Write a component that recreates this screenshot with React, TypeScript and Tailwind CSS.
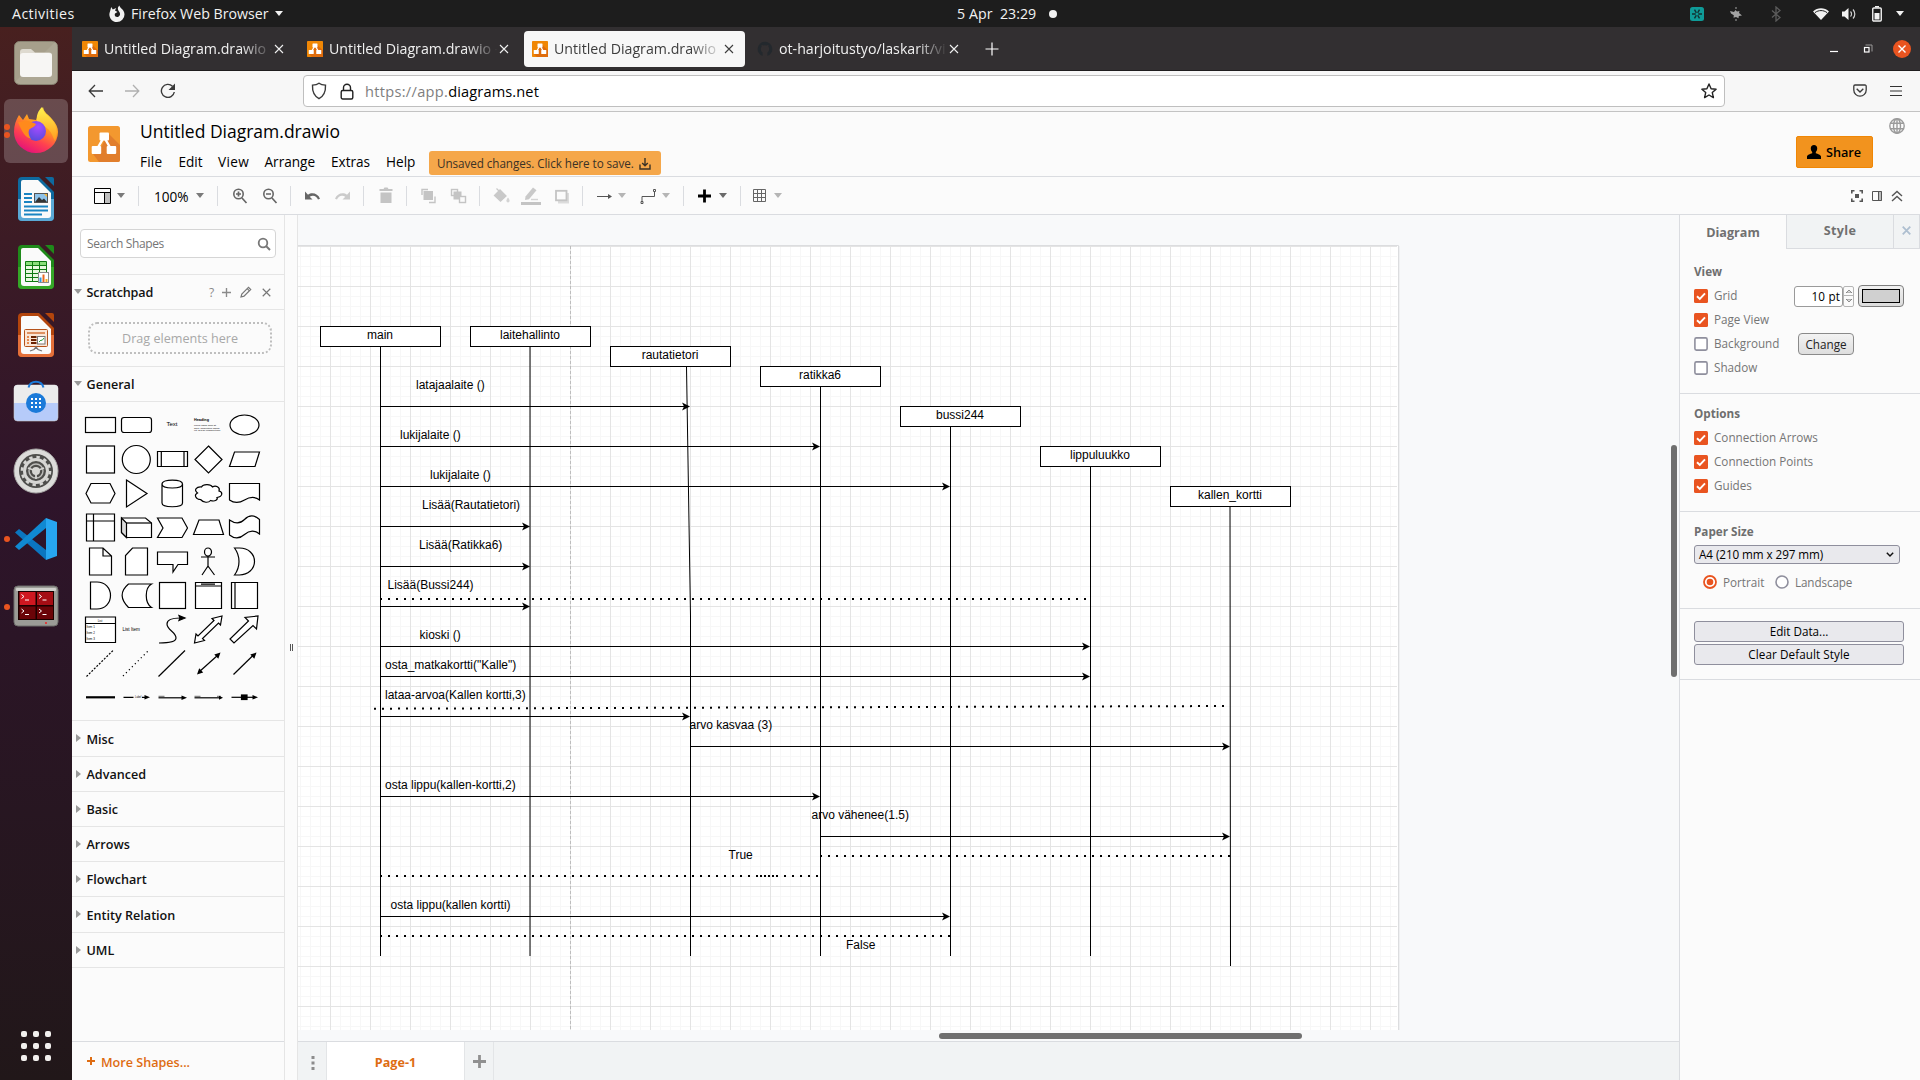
import React from "react";

type P = { children?: React.ReactNode; className?: string };

/* ---------- shared glyphs ---------- */

function DrawioLogo({ className }: { className: string }) {
  return (
    <svg viewBox="0 0 32 32" preserveAspectRatio="none" className={className}>
      <rect width="32" height="32" rx="1.5" fill="#f08705" />
      <path d="M19 6l13 13v13H10l-6-6 8-9z" fill="#df6c0c" />
      <path d="M16 9L8.5 22M16 9l7.5 13" stroke="#fff" strokeWidth="2.6" />
      <rect x="11" y="5" width="10" height="8" rx="1" fill="#fff" />
      <rect x="3.5" y="18" width="10" height="8" rx="1" fill="#fff" />
      <rect x="18.5" y="18" width="10" height="8" rx="1" fill="#fff" />
    </svg>
  );
}

function Caret({ className }: { className: string }) {
  return (
    <svg viewBox="0 0 8 5" className={"h-[5px] w-2 flex-none " + className}>
      <path d="M0 0h8L4 5z" fill="currentColor" />
    </svg>
  );
}

/* ---------- desktop top bar ---------- */

function TopBar() {
  return (
    <header className="flex h-[27px] flex-none items-center bg-[#1d1d1d] text-[14.2px] leading-none text-[#f2f2f2]">
      <span className="ml-3 mt-px w-[62px] tracking-[0.42px]">Activities</span>
      <svg viewBox="0 0 16 18" className="ml-[35px] h-[18px] w-4 flex-none">
        <path d="M8 17A7.5 7.5 0 0 1 1 6.5L2.2 2l1.6 2.4L7.2 3 6 5.6 8.5 7 6 8.6C5 11 7 12.5 8.8 12c2.4-.6 3-3.4 1.2-5.6C8.3 4.5 8.5 2 10.5.5c0 2.5 5 4 5 9A7.5 7.5 0 0 1 8 17z" fill="#f2f2f2" />
      </svg>
      <span className="ml-1.5 mt-px w-[138px] whitespace-nowrap">Firefox Web Browser</span>
      <Caret className="ml-1.5" />
      <span className="ml-[674px] mt-px w-[43px] whitespace-nowrap tracking-[0.1px]">5 Apr</span>
      <span className="mt-px w-9">23:29</span>
      <span className="ml-[13px] size-2 rounded-full bg-[#f2f2f2]" />
      <div className="ml-auto flex items-center">
        <svg viewBox="0 0 14 14" className="h-3.5 w-3.5">
          <rect width="14" height="14" rx="2.5" fill="#0f9b98" />
          <path d="M2 7h10M4.5 2.7l5 8.6M9.5 2.7l-5 8.6" stroke="#12302f" strokeWidth="1.4" />
          <circle cx="7" cy="7" r="1.5" fill="#0f9b98" />
        </svg>
        <svg viewBox="0 0 14 14" className="ml-[25px] h-3.5 w-3.5">
          <path d="M1 4l4 1 1.500-2L8 4.500 10.500 4 10 6l3 2.500L9.800 9l-.3 2.200L7 10l-2.500.7.300-2.400L2 6.500z" fill="#a3a3a3" />
          <circle cx="7" cy="1" r="1" fill="#777" />
          <circle cx="7" cy="13" r="1" fill="#777" />
        </svg>
        <svg viewBox="0 0 10 16" className="ml-7 h-4 w-2.5">
          <path d="M1 4.500l8 7L5 15V1l4 3.500-8 7" fill="none" stroke="#5c5c5c" strokeWidth="1.3" />
        </svg>
        <svg viewBox="0 0 16 12" className="ml-8 h-3 w-4">
          <path d="M0 3.500C4.500-.8 11.500-.8 16 3.500L8 12z" fill="#f2f2f2" />
          <path d="M2 4.600C5.500 1.900 10.500 1.900 14 4.600" fill="none" stroke="#1d1d1d" strokeWidth="1" />
        </svg>
        <svg viewBox="0 0 16 14" className="ml-3 h-3.5 w-4">
          <path d="M1 4.500h2.500L7.500 1v12l-4-3.500H1z" fill="#f2f2f2" />
          <path d="M9.500 4.500a3.500 3.500 0 0 1 0 5M12 2.500a6.500 6.500 0 0 1 0 9" fill="none" stroke="#d0d0d0" strokeWidth="1.2" />
        </svg>
        <svg viewBox="0 0 10 16" className="ml-[15px] h-4 w-2.5">
          <path d="M3 0h4v1.500H3z" fill="#f2f2f2" />
          <rect x=".75" y="2" width="8.5" height="13" rx="1" fill="none" stroke="#f2f2f2" strokeWidth="1.4" />
          <rect x="2.5" y="7" width="5" height="6.5" fill="#f2f2f2" />
        </svg>
        <Caret className="ml-3.5 mr-4" />
      </div>
    </header>
  );
}

/* ---------- dock ---------- */

function Slot({ children, active, dots = 0 }: { children: React.ReactNode; active?: boolean; dots?: number }) {
  return (
    <div className={"relative flex h-16 w-16 items-center justify-center rounded-md " + (active ? "bg-white/20" : "")}>
      {dots > 0 && (
        <div className="absolute inset-y-0 left-0 flex flex-col justify-center gap-[2px]">
          {Array.from({ length: dots }, (_, i) => (
            <span key={i} className="size-1.5 rounded-full bg-[#e95420]" />
          ))}
        </div>
      )}
      {children}
    </div>
  );
}

function OfficeDoc({ dark, light, children }: { dark: string; light: string; children: React.ReactNode }) {
  return (
    <svg viewBox="0 0 36 44" className="h-11 w-9">
      <path d="M4 0h17l15 15v25a4 4 0 0 1-4 4H4a4 4 0 0 1-4-4V4a4 4 0 0 1 4-4z" fill={dark} />
      <path d="M0 22h36v18a4 4 0 0 1-4 4H4a4 4 0 0 1-4-4z" fill={light} />
      <path d="M5 3h15l13 13v22a3 3 0 0 1-3 3H6a3 3 0 0 1-3-3V5a2 2 0 0 1 2-2z" fill="#fafafa" />
      <path d="M27 0h7a2 2 0 0 1 2 2v7z" fill={dark} />
      {children}
    </svg>
  );
}

function Dock() {
  return (
    <nav className="flex w-[72px] flex-none flex-col items-center gap-1 bg-linear-to-b from-[#48201f] via-[#2e142a] via-45% to-[#211719] pt-1">
      <Slot>
        <svg viewBox="0 0 44 44" className="size-11">
          <rect x=".5" y=".5" width="43" height="43" rx="5" fill="#a69f8b" stroke="#878170" />
          <path d="M1 41L41 1a4 4 0 0 1 2 4v33a5 5 0 0 1-5 5H6z" fill="#b3ad9b" opacity=".6" />
          <path d="M6 11a3 3 0 0 1 3-3h8l4 3.500h14a3 3 0 0 1 3 3V20H6z" fill="#dedad0" />
          <rect x="6" y="12" width="32" height="24" rx="3" fill="#f7f6f4" />
        </svg>
      </Slot>
      <Slot active dots={2}>
        <svg viewBox="0 0 44 46" className="mb-0.5 h-[46px] w-11">
          <defs>
            <linearGradient id="ffBody" x1=".8" y1="0" x2=".3" y2="1">
              <stop offset="0" stopColor="#ffe83f" />
              <stop offset=".4" stopColor="#ff9a1f" />
              <stop offset=".7" stopColor="#ff4050" />
              <stop offset="1" stopColor="#e2107c" />
            </linearGradient>
            <radialGradient id="ffGlobe" cx=".6" cy=".3" r=".8">
              <stop offset="0" stopColor="#a64bff" />
              <stop offset="1" stopColor="#4f4bd8" />
            </radialGradient>
            <linearGradient id="ffFlame" x1=".5" y1="0" x2=".5" y2="1">
              <stop offset="0" stopColor="#fff44f" />
              <stop offset="1" stopColor="#ff9a1f" />
            </linearGradient>
          </defs>
          <path d="M5 8l4 5 4-6 2 5 7 1 3-7 4-6c1 6 5 7 9 12 4 4 6 9 6 13a22 21 0 0 1-44 0c0-7 2-12 5-17z" fill="url(#ffBody)" />
          <path d="M28 0c1 6 6 8 10 13 5 6 6 14 3 21-2-3-3-8-6-11-3-4-10-4-12-9-1-5 1-10 5-14z" fill="url(#ffFlame)" />
          <circle cx="22" cy="24" r="10" fill="url(#ffGlobe)" />
          <path d="M4 15c4 0 6-2 10-1 3 1 6 2 8 3-1 3-6 4-7 6-1 3 0 6 2 9-6-2-9-7-13-17z" fill="#ff8a1c" />
        </svg>
      </Slot>
      <Slot>
        <OfficeDoc dark="#0e6a9f" light="#5aa9d6">
          <path d="M6 17h8M6 21h8M6 25h8M6 29.500h24M6 33.500h24M6 37.500h18" stroke="#1984c2" strokeWidth="1.8" />
          <rect x="16.5" y="16.5" width="13" height="9" fill="#8fc3ea" stroke="#555" />
          <path d="M17 25l4-5 3 3 2-1.500L29 25z" fill="#333" />
          <path d="M26 17h3v3z" fill="#f5b73c" />
        </OfficeDoc>
      </Slot>
      <Slot>
        <OfficeDoc dark="#1f8a1a" light="#35a827">
          <rect x="7.5" y="16.5" width="21" height="20" fill="#e8f9df" />
          <rect x="7.5" y="16.5" width="21" height="4" fill="#8ade7a" />
          <path d="M7.500 16.500h21v20h-21zM7.500 20.500h21M7.500 24.500h21M7.500 28.500h21M7.500 32.500h21M14.500 16.500v20M21.500 16.500v20" fill="none" stroke="#0f7a12" />
          <rect x="20.5" y="27.5" width="10" height="10" fill="#fff" stroke="#8a8a8a" />
          <path d="M22.500 37v-4.500" stroke="#2a98e0" strokeWidth="2" />
          <path d="M25.500 37v-7.500" stroke="#e8691f" strokeWidth="2" />
          <path d="M28.500 37v-3" stroke="#f3b321" strokeWidth="2" />
        </OfficeDoc>
      </Slot>
      <Slot>
        <OfficeDoc dark="#b3450c" light="#e4703a">
          <rect x="6.5" y="16.5" width="23" height="17" rx="1" fill="#fbe6d6" stroke="#b5521a" />
          <path d="M9 20h18" stroke="#d5733a" strokeWidth="1.5" />
          <path d="M9 24h2M9 27h2M9 30h2" stroke="#e58a50" strokeWidth="1.8" />
          <path d="M13 24h5.500M13 27h5.500M13 30h5.500" stroke="#6b2200" strokeWidth="1.8" />
          <rect x="19.5" y="23.5" width="7.5" height="7.5" fill="#fff" stroke="#777" />
          <path d="M21 29l2-2 1 .5 2-2.500" fill="none" stroke="#2d9e3a" />
          <path d="M12 38l4-1.500L18 34l2 2.500 4 1.500" fill="none" stroke="#777" strokeWidth="1.3" />
        </OfficeDoc>
      </Slot>
      <Slot>
        <svg viewBox="0 0 46 44" className="mb-1.5 h-11 w-[46px]">
          <rect x="1" y="7" width="44" height="36" rx="3.5" fill="#b6cbfa" stroke="#c9c9c9" strokeWidth=".6" />
          <path d="M1 25V10.500A3.500 3.500 0 0 1 4.500 7h37a3.500 3.500 0 0 1 3.500 3.500V25z" fill="#ececec" />
          <path d="M15.500 9.500a7.800 7.800 0 0 1 15 0" fill="none" stroke="#1b7ad9" strokeWidth="2" />
          <circle cx="23" cy="25" r="10" fill="#1b7ad9" />
          <g fill="#fff">
            {[18, 22, 26].map((x) => [20, 24, 28].map((y) => <rect key={x + "-" + y} x={x} y={y} width="2" height="2" />))}
          </g>
        </svg>
      </Slot>
      <Slot>
        <svg viewBox="0 0 46 46" className="size-[46px]">
          <circle cx="23" cy="23" r="22" fill="#dcdcda" stroke="#a9a9a7" />
          <circle cx="23" cy="23" r="17" fill="#4e4e4c" />
          <circle cx="23" cy="23" r="11.5" fill="none" stroke="#d6d6d4" strokeWidth="3" />
          <circle cx="23" cy="23" r="14" fill="none" stroke="#d6d6d4" strokeWidth="2.6" strokeDasharray="3.4 3.93" />
          <circle cx="23" cy="23" r="7" fill="none" stroke="#bdbdbb" strokeWidth="1.4" />
          <circle cx="23" cy="23" r="4" fill="#d6d6d4" />
          <path d="M23 23L15 20M23 23l8-3M23 23v8" stroke="#d6d6d4" strokeWidth="1.8" />
        </svg>
      </Slot>
      <Slot dots={1}>
        <svg viewBox="0 0 42 42" className="size-[42px]">
          <path d="M0 14.500l4-3.500 27 21v10z" fill="#0b76c0" />
          <path d="M0 28.500L4 32l27-22V0z" fill="#1089d2" />
          <path d="M31 0l11 4v34l-11 4z" fill="#27a6f0" />
        </svg>
      </Slot>
      <Slot dots={1}>
        <svg viewBox="0 0 46 42" className="mb-0.5 h-[42px] w-[46px]">
          <rect x="1" y="1" width="44" height="40" rx="4" fill="#9b9b96" stroke="#6d6d6a" />
          <rect x="3" y="3" width="40" height="3" rx="1" fill="#cfcfcb" />
          <rect x="5" y="6" width="36" height="29" fill="#1c0000" />
          <rect x="6.5" y="7" width="16" height="13" fill="#cf1720" />
          <rect x="24" y="7" width="16" height="13" fill="#a50d14" />
          <rect x="6.5" y="21.5" width="16" height="12.5" fill="#6b0408" />
          <rect x="24" y="21.5" width="16" height="12.5" fill="#6b0408" />
          <path d="M8.500 9.500l2.500 2-2.500 2M12 15h4M26 9.500l2.500 2-2.500 2M29.500 15h4M8.500 24l2.500 2-2.500 2M12 29.500h4M26 24l2.500 2-2.500 2M29.500 29.500h4" fill="none" stroke="#fff" strokeWidth="1" />
          <circle cx="33" cy="38" r="1" fill="#f02020" />
        </svg>
      </Slot>
      <div className="mt-auto mb-[19px] grid grid-cols-3 gap-1.5">
        {Array.from({ length: 9 }, (_, i) => (
          <span key={i} className="size-1.5 rounded-[2px] bg-[#f2f0ee]" />
        ))}
      </div>
    </nav>
  );
}

/* ---------- browser chrome ---------- */

function Tab({ title, active, icon }: { title: string; active?: boolean; icon: React.ReactNode }) {
  return (
    <div
      className={
        "flex h-9 w-[221px] flex-none items-center rounded pl-2 " +
        (active ? "bg-[#f7f7f7] text-[#3d3d3d]" : "text-[#f0f0f0]")
      }
    >
      {icon}
      <div className="ml-1.5 -mr-1.5 w-[172px] flex-none whitespace-nowrap text-[14.2px] leading-6 [mask-image:linear-gradient(to_right,black_80%,transparent_98%)]">
        {title}
      </div>
      <svg viewBox="0 0 18 18" className="size-[18px] flex-none">
        <path d="M5 5l8 8M13 5l-8 8" stroke="currentColor" strokeWidth="1.1" />
      </svg>
    </div>
  );
}

function BrowserTabs() {
  const logo = <DrawioLogo className="h-4 w-4 flex-none" />;
  return (
    <div className="flex h-11 flex-none items-center gap-1 border-b border-[#1f1d1e] bg-[#322f31] pl-0.5 pt-px">
      <Tab title="Untitled Diagram.drawio -" icon={logo} />
      <Tab title="Untitled Diagram.drawio -" icon={logo} />
      <Tab title="Untitled Diagram.drawio -" active icon={logo} />
      <Tab
        title="ot-harjoitustyo/laskarit/vi"
        icon={
          <svg viewBox="0 0 16 16" className="h-4 w-4 flex-none">
            <path d="M8 .8a7.300 7.300 0 0 0-2.400 14.200v-3.500C4.300 10.500 3.800 9.500 3.800 8c0-1 .3-1.700.8-2.300l-.1-2 1.900.8a7 7 0 0 1 3.200 0l1.900-.8-.1 2c.5.6.8 1.300.8 2.300 0 1.500-.5 2.500-1.800 3.500V15A7.300 7.300 0 0 0 8 .8z" fill="#23282d" />
          </svg>
        }
      />
      <svg viewBox="0 0 14 14" className="ml-[11px] size-3.5">
        <path d="M7 .5v13M.5 7h13" stroke="#fff" strokeWidth="1.2" />
      </svg>
      <div className="ml-auto mr-[9px] flex items-center">
        <svg viewBox="0 0 8 12" className="h-3 w-2">
          <path d="M0 8.500h8" stroke="#fff" strokeWidth="1.2" />
        </svg>
        <svg viewBox="0 0 10 10" className="ml-[25px] size-2.5">
          <path d="M2.500 1h6.500v6.500" fill="none" stroke="#999" strokeWidth="1" />
          <rect x="1.5" y="3.5" width="4.5" height="4.5" fill="none" stroke="#fff" strokeWidth="1.2" />
        </svg>
        <svg viewBox="0 0 18 18" className="ml-5 size-[18px]">
          <circle cx="9" cy="9" r="9" fill="#e95420" />
          <path d="M5.500 5.500l7 7M12.500 5.500l-7 7" stroke="#fff" strokeWidth="1.4" />
        </svg>
      </div>
    </div>
  );
}

function NavBar() {
  return (
    <div className="flex h-[41px] flex-none items-center border-b border-[#c3c3c3] bg-[#f7f7f7]">
      <svg viewBox="0 0 16 14" className="ml-4 h-3.5 w-4 flex-none">
        <path d="M15 7H1.500M7 1L1.200 7 7 13" fill="none" stroke="#3a3a3a" strokeWidth="1.3" />
      </svg>
      <svg viewBox="0 0 16 14" className="ml-5 h-3.5 w-4 flex-none">
        <path d="M1 7h13.500M9 1l5.800 6L9 13" fill="none" stroke="#b0b0b0" strokeWidth="1.3" />
      </svg>
      <svg viewBox="0 0 16 16" className="ml-5 size-4 flex-none">
        <path d="M14.300 9A6.500 6.500 0 1 1 12.500 3.300" fill="none" stroke="#3a3a3a" strokeWidth="1.4" />
        <path d="M15 .5V7H8.500z" fill="#3a3a3a" />
      </svg>
      <div className="ml-[127px] flex h-8 w-[1422px] flex-none items-center rounded border border-[#bfbfbf] bg-white">
        <svg viewBox="0 0 16 18" className="ml-[7px] h-[18px] w-4 flex-none">
          <path d="M8 1.200c2 1.500 4.300 1.800 6.500 1.900C14.800 9.500 13 14 8 16.600 3 14 1.200 9.500 1.500 3.100 3.700 3 6 2.700 8 1.200z" fill="none" stroke="#3a3a3a" strokeWidth="1.4" />
        </svg>
        <svg viewBox="0 0 14 17" className="ml-[13px] h-[17px] w-3.5 flex-none">
          <rect x="1.2" y="7.5" width="11.6" height="8.5" rx="1.5" fill="none" stroke="#222" strokeWidth="1.4" />
          <path d="M3.500 7.500V4.800a3.500 3.500 0 0 1 7 0v2.700" fill="none" stroke="#222" strokeWidth="1.4" />
        </svg>
        <span className="ml-[11px] whitespace-nowrap text-[14.6px] leading-6 text-[#7e7e7e]">
          <span className="tracking-[0.3px]">https://app.</span>
          <span className="tracking-[0.12px] text-black">diagrams.net</span>
        </span>
        <svg viewBox="0 0 16 16" className="ml-auto mr-[7px] size-4">
          <path d="M8 1l2.100 4.700 5 .5-3.800 3.400 1.100 5L8 12l-4.400 2.600 1.100-5L.9 6.200l5-.5z" fill="none" stroke="#222" strokeWidth="1.4" strokeLinejoin="round" />
        </svg>
      </div>
      <svg viewBox="0 0 14 14" className="ml-auto size-3.5">
        <path d="M2 1h10a1.200 1.200 0 0 1 1.200 1.200V6A6.200 6.200 0 0 1 .8 6V2.200A1.200 1.200 0 0 1 2 1z" fill="none" stroke="#3a3a3a" strokeWidth="1.3" />
        <path d="M3.700 4.800L7 8l3.300-3.200" fill="none" stroke="#3a3a3a" strokeWidth="1.4" />
      </svg>
      <svg viewBox="0 0 12 12" className="ml-[23px] mr-[18px] size-3">
        <path d="M0 1.500h12M0 6h12M0 10.500h12" stroke="#333" strokeWidth="1.2" />
      </svg>
    </div>
  );
}

/* ---------- editor header ---------- */

function EditorHeader() {
  return (
    <div className="flex h-[65px] flex-none border-b border-[#dadce0] bg-[#fbfbfb]">
      <svg viewBox="0 0 32 36" className="ml-4 mt-3.5 h-9 w-8 flex-none">
        <rect width="32" height="36" rx="2.5" fill="#f3982f" />
        <path d="M20 7l12 12v15a2 2 0 0 1-2 2H11l-6-8 9-8z" fill="#e17e2c" />
        <path d="M16 11L8.500 24M16 11l7.500 13" stroke="#fff" strokeWidth="2.5" />
        <rect x="11.5" y="6.5" width="9.5" height="8" rx="1" fill="#fff" />
        <rect x="3.7" y="20" width="9.5" height="8" rx="1" fill="#fff" />
        <rect x="18.7" y="20" width="9.5" height="8" rx="1" fill="#fff" />
      </svg>
      <div className="ml-5 mt-[5px] flex flex-col text-black">
        <div className="h-[29px] text-[17.5px] leading-[29px]">Untitled Diagram.drawio</div>
        <div className="flex h-6 text-[13.6px] leading-[31px]">
          <span className="w-[38.5px] tracking-[0.2px]">File</span>
          <span className="w-[39.5px]">Edit</span>
          <span className="w-[46.5px] tracking-[0.4px]">View</span>
          <span className="w-[66.5px]">Arrange</span>
          <span className="w-[55px]">Extras</span>
          <span className="w-[43px]">Help</span>
          <div className="mt-[5px] flex h-6 w-[232px] flex-none items-center whitespace-nowrap rounded-[3px] bg-[#f5a74a] pl-2 pt-px text-[11.7px] leading-none tracking-[-0.07px] text-[#3b3226]">
            Unsaved changes. Click here to save.
            <svg viewBox="0 0 12 12" className="ml-[5px] size-3">
              <path d="M1 6.500V11h10V6.500M6 0v7.500M3.200 5L6 7.800 8.800 5" fill="none" stroke="#3b3226" strokeWidth="1.4" />
            </svg>
          </div>
        </div>
      </div>
      <div className="ml-auto mr-12 mt-6 flex h-8 w-[77px] flex-none items-center justify-center rounded-[2px] border border-[#f08705] bg-[#f2931e] pt-0.5 text-[12.7px] font-semibold text-black">
        <svg viewBox="0 0 14 14" className="mb-0.5 mr-[5px] h-3.5 w-3.5">
          <path d="M7 0a3.200 3.200 0 0 1 3.200 3.500c0 1.500-.6 2.700-1.400 3.500v1.200c2 .8 5.200 1.600 5.200 3.300V14H0v-2.500c0-1.700 3.200-2.500 5.200-3.300V7C4.400 6.200 3.800 5 3.800 3.500A3.200 3.200 0 0 1 7 0z" />
        </svg>
        Share
      </div>
      <svg viewBox="0 0 16 16" className="-ml-8 mr-[15.5px] mt-1.5 size-4">
        <g fill="none" stroke="#9b9b9b" strokeWidth="1.4">
          <circle cx="8" cy="8" r="7.2" />
          <ellipse cx="8" cy="8" rx="3.5" ry="7.2" />
          <path d="M1 5.300h14M1 10.700h14M8 1v14" />
        </g>
      </svg>
    </div>
  );
}

function Sep({ className }: { className: string }) {
  return <span className={"h-5 w-px flex-none bg-[#dadce0] " + className} />;
}

function Tool({ className, children }: P) {
  return (
    <svg viewBox="0 0 20 20" className={"size-5 flex-none " + className}>
      {children}
    </svg>
  );
}

function Toolbar() {
  return (
    <div className="flex h-[38px] flex-none items-center border-b border-[#dadce0] bg-[#fbfbfb]">
      <svg viewBox="0 0 18 18" className="ml-[22px] mr-[5px] size-[18px] flex-none">
        <rect x="11" y="6" width="5" height="10" fill="#bdbdbd" />
        <path d="M.5 1.500h16v15h-16zM.5 5.500h16M10.500 5.500v11" fill="none" stroke="#000" />
      </svg>
      <Caret className="text-[#7a7a7a]" />
      <Sep className="ml-[13px]" />
      <span className="ml-[15px] mt-0.5 w-[34px] text-[13.6px] leading-none text-black">100%</span>
      <Caret className="ml-2 text-[#7a7a7a]" />
      <Sep className="ml-[13px]" />
      <Tool className="ml-3">
        <circle cx="8.5" cy="8" r="4.7" fill="none" stroke="#666" strokeWidth="1.6" />
        <path d="M12 12l4.500 5M8.500 5.500v5M6 8h5" stroke="#666" strokeWidth="1.7" />
      </Tool>
      <Tool className="ml-2.5">
        <circle cx="8.5" cy="8" r="4.7" fill="none" stroke="#666" strokeWidth="1.6" />
        <path d="M12 12l4.500 5M6 8h5" stroke="#666" strokeWidth="1.7" />
      </Tool>
      <Sep className="ml-2.5" />
      <Tool className="ml-[11px]">
        <path d="M3 5.500v8h7.500l-2.800-2.800c3-2 6.800-1.200 8.300 2.800l2-.7C16 7.500 10 5.800 6 8.800z" fill="#666" />
      </Tool>
      <Tool className="ml-2.5">
        <path d="M18 5.500v8h-7.500l2.800-2.800c-3-2-6.800-1.200-8.300 2.800l-2-.7c2-5.300 8-7 12-4z" fill="#cbcbcb" />
      </Tool>
      <Sep className="ml-[11px]" />
      <Tool className="ml-3">
        <path d="M3.500 3h4l1-1.500h3l1 1.500h4v2h-13zM4.500 6.500h11V17h-11z" fill="#c4c4c4" />
      </Tool>
      <Sep className="ml-2.5" />
      <Tool className="ml-[11px]">
        <rect x="5.5" y="5" width="9.5" height="9" fill="#c4c4c4" />
        <path d="M4 9V3.500h6M17 10.500v6h-6" fill="none" stroke="#c4c4c4" strokeWidth="1.4" />
      </Tool>
      <Tool className="ml-2.5">
        <rect x="3.5" y="3.5" width="6" height="6" fill="#fbfbfb" stroke="#c4c4c4" strokeWidth="1.4" />
        <rect x="5.5" y="5.5" width="8" height="8" fill="#c4c4c4" />
        <rect x="11.5" y="10.5" width="6" height="6" fill="#fbfbfb" stroke="#c4c4c4" strokeWidth="1.4" />
      </Tool>
      <Sep className="ml-[11px]" />
      <Tool className="ml-[11px]">
        <path d="M3.500 9.500L9 4l6 6-5.500 5zM5.500 2.500l3 3" fill="#c9c9c9" stroke="#c9c9c9" strokeWidth="1.3" />
        <path d="M17 11.500c1.200 1.700 1.600 2.500 1.600 3.300a1.600 1.600 0 0 1-3.200 0c0-.8.4-1.600 1.600-3.300z" fill="#d4d4d4" />
      </Tool>
      <Tool className="ml-2.5">
        <path d="M4.500 10.500L12 1.500l3.500 2.700-7.500 9-4 .8z" fill="#c9c9c9" />
        <path d="M10 13.500h7" stroke="#d4d4d4" strokeWidth="1.4" />
        <path d="M0 17.500h20" stroke="#c4c4c4" strokeWidth="3" />
      </Tool>
      <Tool className="ml-[11px]">
        <path d="M6 7h11v10.500H6z" fill="#dcdcdc" />
        <rect x="4" y="4.800" width="10.500" height="9.500" fill="#fbfbfb" stroke="#c4c4c4" strokeWidth="1.8" />
      </Tool>
      <Sep className="ml-2.5" />
      <Tool className="ml-[11px]">
        <path d="M3 10.500h13" stroke="#555" />
        <path d="M14 8l4 2.500-4 2.500z" fill="#555" />
      </Tool>
      <Caret className="ml-1 text-[#b5b5b5]" />
      <Tool className="ml-3">
        <path d="M4 15v-4.500h12.500V6" fill="none" stroke="#555" />
        <path d="M3 15.500h2v2H3zM15.500 3.500h2v2h-2z" fill="#fff" stroke="#555" />
      </Tool>
      <Caret className="ml-1 text-[#b5b5b5]" />
      <Sep className="ml-[13px]" />
      <Tool className="ml-2.5">
        <path d="M10.500 3.500v13M4 10h13" stroke="#000" strokeWidth="2.800" />
      </Tool>
      <Caret className="ml-[5px] text-[#6a6a6a]" />
      <Sep className="ml-[13px]" />
      <Tool className="ml-[9px]">
        <path d="M3.500 3.500h12v12h-12zM3.500 7.500h12M3.500 11.500h12M7.500 3.500v12M11.500 3.500v12" fill="none" stroke="#666" />
      </Tool>
      <Caret className="ml-1 text-[#b5b5b5]" />
      <div className="ml-auto mr-[17px] flex items-center gap-2">
        <svg viewBox="0 0 12 12" className="size-3">
          <path d="M.8 3.500V.8h2.700M8.500.8h2.700v2.700M11.200 8.500v2.700H8.500M3.500 11.200H.8V8.500" fill="none" stroke="#555" strokeWidth="1.6" />
          <rect x="4" y="4" width="4" height="4" fill="#555" />
        </svg>
        <svg viewBox="0 0 12 12" className="size-3">
          <rect x="7" y="1" width="4" height="10" fill="#bbb" />
          <path d="M1.500 1.500h9v9h-9zM7.500 1.500v9" fill="none" stroke="#555" />
        </svg>
        <svg viewBox="0 0 12 12" className="size-3">
          <path d="M1 6l5-4.500L11 6M1 11l5-4.500L11 11" fill="none" stroke="#555" strokeWidth="1.4" />
        </svg>
      </div>
    </div>
  );
}

/* ---------- shape sidebar ---------- */

const shapes: React.ReactNode[] = [
  <rect x="3.5" y="9.5" width="30" height="15" />,
  <rect x="3.5" y="9.5" width="30" height="15" rx="2.5" />,
  <text x="18" y="18" fontSize="6" textAnchor="middle" fill="#000" stroke="none">Text</text>,
  <g stroke="none" fill="#000">
    <text x="4" y="13" fontSize="3.8" fontWeight="bold">Heading</text>
    <text x="4" y="18" fontSize="2.3">Lorem ipsum dolor sit</text>
    <text x="4" y="20.5" fontSize="2.3">amet, consectetur adipisi</text>
    <text x="4" y="23" fontSize="2.3">elit, sed do eiusmod temp</text>
  </g>,
  <ellipse cx="18.5" cy="17" rx="14.5" ry="10" />,
  <rect x="4.5" y="4" width="28" height="27" />,
  <circle cx="18.3" cy="17.5" r="14" />,
  <path d="M3.500 9.500h30v15h-30zM7.300 9.500v15M30 9.500v15" />,
  <path d="M18.500 4l13.500 13.500L18.500 31 5 17.500z" />,
  <path d="M8.500 10h25L29 24.500H3.500z" />,
  <path d="M9 7.500h19l5 10-5 9.500H9l-5-9.500z" />,
  <path d="M8.500 4l20.500 13.500L8.500 31z" />,
  <path d="M8 8v19c0 5 20.500 5 20.500 0V8c0-5.300-20.500-5.300-20.500 0s20.500 5.300 20.500 0" />,
  <path d="M11.500 11c-5-.5-8 3-4 6-4 2-1.500 6.500 3 6.500 3 3.500 8 3.500 10 1 5 1.500 7.500-1 6.500-3 6-1 6-5.500 2-6.500 1.500-4-3.500-6-6.500-4-2-3.500-9.500-3-11 0z" />,
  <path d="M3.500 7.500h30v16.500c-5-4-10-3-15 0s-10 3.500-15 0z" />,
  <path d="M4.500 4h28v27h-28zM11.500 4v27M4.500 11h28" />,
  <g>
    <path d="M3.500 8h24l6 5v14.500h-25l-5-5z" />
    <path d="M3.500 8l5 5v14.500l-5-5z" fill="#dcdcdc" />
    <path d="M8.500 13h25" />
  </g>,
  <path d="M3.500 8H28l5.500 10-5.500 9.500H3.500L9 18z" />,
  <path d="M9 10h20l4.500 14.500h-30z" />,
  <path d="M3.500 10c5 3.500 10 4.500 15-.5s10-4.500 15 0v14.500c-5-4-10-4-15 .5s-10 4.500-15 .5z" />,
  <path d="M7.500 4H21l8.500 8v19h-22zM21 4v8h8.500" />,
  <path d="M14.500 4h15v27h-22V11.500z" />,
  <path d="M3.500 8h30v12.500H24L19 28v-7.500H3.500z" />,
  <path d="M18 12.500v11M11 13h14M18 22l-6 9M18 22l6.500 9M14.500 8a3.500 4 0 1 0 7 0a3.500 4 0 1 0-7 0" />,
  <path d="M8.500 4h5c9 0 15 6 15 13.500S22 31 13.500 31h-5c6-8 6-19 0-27z" />,
  <path d="M8.500 4H15c8 0 13.500 6 13.500 13.500S23 31 15 31H8.500z" />,
  <path d="M10.500 6h23c-7 4-7 19 0 23.500h-23c-8-8-9-16 0-23.500z" />,
  <rect x="5.5" y="4.5" width="26" height="26" />,
  <path d="M5.500 4.500h26v26h-26zM5.500 8h26M11 6.200h14" />,
  <path d="M5.500 4.500h26v26h-26zM9 4.500v26" />,
  <g>
    <path d="M3.500 5h30v25.500h-30zM3.500 11.500h30" />
    <g stroke="none" fill="#000" fontSize="3">
      <text x="18" y="9.5" textAnchor="middle">List</text>
      <text x="4.5" y="15.5">Item 1</text>
      <text x="4.5" y="21.5">Item 2</text>
      <text x="4.5" y="27.5">Item 3</text>
    </g>
  </g>,
  <text x="4.5" y="19" fontSize="4.6" fill="#000" stroke="none">List Item</text>,
  <g fill="none">
    <path d="M5 31c9 0 17-1 17-5 0-6-9-8-9-14 0-4 5-6 13-6" />
    <path d="M25 3.500L31 6l-6 2.500 1-2.500z" fill="#000" />
  </g>,
  <path d="M32 4l-1.500 9-2-2L12.500 26.500l2 2L4.500 31 6 22l2 2L24 8.500l-2-2z" />,
  <path d="M32 4l-1.500 13-3.500-3.500L8 31l-4-4L22.500 9 19 5.500z" />,
  <path d="M4.500 30.500L31 4.500" strokeDasharray="2 1.5" />,
  <path d="M5 30L30 5" strokeDasharray="1.2 3" />,
  <path d="M4.500 30.500L31 4.500" />,
  <g>
    <path d="M9 26L28 9" />
    <path d="M30.500 6.500l-2.200 6.200-4-4.200zM7 28.500l2.200-6.200 4 4.200z" fill="#000" stroke="none" />
  </g>,
  <g>
    <path d="M7.500 28.500L28 8.500" />
    <path d="M30.500 6.500l-2.200 6.200-4-4.200z" fill="#000" stroke="none" />
  </g>,
  <path d="M4 17.300h29" strokeWidth="2.2" />,
  <g>
    <path d="M5.500 17.300h10M24 17.300h4" />
    <text x="17" y="18" fontSize="2.6" fill="#000" stroke="none">Label</text>
    <path d="M32 17.300l-5.500 2.300v-4.600z" fill="#000" stroke="none" />
  </g>,
  <g>
    <path d="M4.500 17.800h25" />
    <path d="M4.500 16.300h6" strokeWidth=".6" />
    <path d="M33 17.800l-5.500 2.300v-4.600z" fill="#000" stroke="none" />
  </g>,
  <g>
    <path d="M4.500 17.800h25" />
    <path d="M4.500 16.300h6M27 16.300h4" strokeWidth=".6" />
    <path d="M33 17.800l-4 2v-4z" fill="#000" stroke="none" />
  </g>,
  <g>
    <path d="M5.500 17.300h23" />
    <rect x="15.5" y="15" width="5.5" height="4.5" fill="#000" />
    <path d="M32 17.300l-5.500 2.300v-4.600z" fill="#000" stroke="none" />
  </g>,
];

function SectionTitle({ title, open, height, children }: { title: string; open?: boolean; height: string; children?: React.ReactNode }) {
  return (
    <div className={"flex flex-none items-center border-b border-[#e5e5e5] text-[12.6px] font-semibold text-[#111] " + height}>
      {open ? (
        <Caret className="mb-0.5 ml-0.5 text-[#9a9a9a]" />
      ) : (
        <svg viewBox="0 0 5 8" className="mb-px ml-1 mr-px h-2 w-[5px]">
          <path d="M0 0v8l5-4z" fill="#9a9a9a" />
        </svg>
      )}
      <span className="ml-[4.5px] mt-[3px]">{title}</span>
      {children}
    </div>
  );
}

function ShapePanel() {
  return (
    <aside className="flex w-[213px] flex-none flex-col border-r border-[#e5e5e5] bg-[#fbfbfb]">
      <div className="h-[60px] flex-none border-b border-[#e5e5e5] px-2 pt-3.5">
        <div className="flex h-[29px] w-[196px] items-center rounded border border-[#d5d5d5] bg-white pl-1.5 text-[12px] tracking-[-0.35px] text-[#757575]">
          Search Shapes
          <svg viewBox="0 0 14 14" className="ml-auto mr-1 size-3.5">
            <circle cx="6" cy="6" r="4.3" fill="none" stroke="#777" strokeWidth="1.8" />
            <path d="M9 9l4 4" stroke="#777" strokeWidth="2" />
          </svg>
        </div>
      </div>
      <SectionTitle title="Scratchpad" open height="h-[35px] tracking-[-0.15px]">
        <span className="ml-auto mt-0.5 text-[12px] font-normal text-[#8a8a8a]">?</span>
        <svg viewBox="0 0 10 10" className="ml-2 size-[9px]">
          <path d="M5 0v10M0 5h10" stroke="#8a8a8a" strokeWidth="1.5" />
        </svg>
        <svg viewBox="0 0 12 12" className="ml-[9px] size-3">
          <path d="M1 11l.8-3L8.500 1.300l2.200 2.200L4 10.200zM7.200 2.600l2.200 2.200" fill="none" stroke="#777" strokeWidth="1.2" />
        </svg>
        <svg viewBox="0 0 10 10" className="ml-2.5 mr-[13px] size-[9px]">
          <path d="M.8.8l8.400 8.400M9.200.8L.8 9.200" stroke="#777" strokeWidth="1.3" />
        </svg>
      </SectionTitle>
      <div className="h-[57px] flex-none border-b border-[#e5e5e5] pl-4 pt-3">
        <div className="flex h-8 w-[184px] items-center justify-center rounded-[9px] border-2 border-dotted border-[#bebebe] pt-0.5 text-[12.6px] text-[#a8a8a8]">
          Drag elements here
        </div>
      </div>
      <SectionTitle title="General" open height="h-[35px]" />
      <div className="grid h-[319px] flex-none auto-rows-[34px] grid-cols-[repeat(5,36px)] border-b border-[#e5e5e5] pl-2.5 pt-1.5">
        {shapes.map((s, i) => (
          <svg key={i} viewBox="0 0 36 34" className="h-[34px] w-9 font-['Liberation_Sans',sans-serif]" fill="#fff" stroke="#000" strokeWidth="1.200">
            {s}
          </svg>
        ))}
      </div>
      <SectionTitle title="Misc" height="h-9" />
      <SectionTitle title="Advanced" height="h-[35px]" />
      <SectionTitle title="Basic" height="h-[35px]" />
      <SectionTitle title="Arrows" height="h-[35px]" />
      <SectionTitle title="Flowchart" height="h-[35px]" />
      <SectionTitle title="Entity Relation" height="h-9" />
      <SectionTitle title="UML" height="h-[35px]" />
      <div className="mt-auto flex h-[39px] flex-none items-center border-t border-[#dadce0] pl-[15px] pt-1 text-[12.6px] font-semibold text-[#de6c12]">
        <svg viewBox="0 0 8 8" className="mb-1 mr-1.5 size-2">
          <path d="M4 0v8M0 4h8" stroke="#de6c12" strokeWidth="2" />
        </svg>
        More Shapes...
      </div>
    </aside>
  );
}

/* ---------- sequence diagram ---------- */

const boxes: [string, number, number][] = [
  ["main", 320.5, 326.5],
  ["laitehallinto", 470.5, 326.5],
  ["rautatietori", 610.5, 346.5],
  ["ratikka6", 760.5, 366.5],
  ["bussi244", 900.5, 406.5],
  ["lippuluukko", 1040.5, 446.5],
  ["kallen_kortti", 1170.5, 486.5],
];

const lifelines = [
  "M380.500 347V956",
  "M530 347V956",
  "M686.500 367L690.500 616V956",
  "M820.500 387V956",
  "M950.500 427V956",
  "M1090.500 467V956",
  "M1230 507L1230.500 966",
];

const arrows: [number, number, number][] = [
  [380.5, 690, 406.5],
  [380.5, 820, 446.5],
  [380.5, 950, 486.5],
  [380.5, 530, 526.5],
  [380.5, 530, 566.5],
  [380.5, 530, 606.5],
  [380.5, 1090, 646.5],
  [380.5, 1090, 676.5],
  [380.5, 690, 716.5],
  [690.5, 1230, 746.5],
  [380.5, 820, 796.5],
  [820.5, 1230, 836.5],
  [380.5, 950, 916.5],
];

const returns = [
  "M380 599H1090",
  "M374 708.700L1230 706",
  "M820 856H1231",
  "M380 876H775",
  "M760 876H820",
  "M380 936H951",
];

const labels: [string, number, number][] = [
  ["latajaalaite ()", 416, 389],
  ["lukijalaite ()", 400, 439],
  ["lukijalaite ()", 430, 479],
  ["Lisää(Rautatietori)", 422, 509],
  ["Lisää(Ratikka6)", 419, 549],
  ["Lisää(Bussi244)", 387.5, 589],
  ["kioski ()", 419.5, 639],
  ["osta_matkakortti(\"Kalle\")", 385, 669],
  ["lataa-arvoa(Kallen kortti,3)", 385, 699],
  ["arvo kasvaa (3)", 689.5, 729],
  ["osta lippu(kallen-kortti,2)", 385, 789],
  ["arvo vähenee(1.5)", 811.5, 819],
  ["True", 728.5, 859],
  ["osta lippu(kallen kortti)", 390.5, 909],
  ["False", 846, 949],
];

function Canvas() {
  return (
    <div className="relative min-h-0 flex-1 overflow-hidden bg-[#f8f9fa]">
      <svg viewBox="298 215 1381 826" className="block h-[826px] w-[1381px] font-['Liberation_Sans',Arial,sans-serif] text-[12px]">
        <defs>
          <pattern id="grid" x="330" y="286" width="40" height="40" patternUnits="userSpaceOnUse">
            <path d="M10.500 0v40M20.500 0v40M30.500 0v40M0 10.500h40M0 20.500h40M0 30.500h40" stroke="#f7f7f7" />
            <path d="M.5 0v40M0 .5h40" stroke="#e4e4e4" />
          </pattern>
        </defs>
        <rect x="298" y="246" width="1101" height="784" fill="#fff" />
        <rect x="298" y="246" width="1099" height="784" fill="url(#grid)" />
        <path d="M298 245.500H1398.500V1030" fill="none" stroke="#dcdddf" />
        <path d="M1399.500 246V1030" fill="none" stroke="#eff0f2" />
        <path d="M570.500 246V1030" stroke="#bdbdbd" strokeDasharray="3 2" />
        <g fill="none" stroke="#000">
          {lifelines.map((d) => (
            <path key={d} d={d} />
          ))}
          {returns.map((d) => (
            <path key={d} d={d} strokeWidth="2" strokeDasharray="2 6" />
          ))}
          {arrows.map(([x1, x2, y]) => (
            <g key={x1 + "-" + x2 + "-" + y}>
              <path d={`M${x1} ${y}H${x2 - 6}`} />
              <path d={`M${x2} ${y}l-8 4 2-4-2-4z`} fill="#000" stroke="none" />
            </g>
          ))}
        </g>
        {boxes.map(([t, x, y]) => (
          <g key={t}>
            <rect x={x} y={y} width="120" height="20" fill="#fff" stroke="#000" />
            <text x={x + 59.5} y={y + 12.5} textAnchor="middle">{t}</text>
          </g>
        ))}
        {labels.map(([t, x, y]) => (
          <text key={t + y} x={x} y={y}>{t}</text>
        ))}
      </svg>
      <div className="absolute left-[1373px] top-[230px] h-[232px] w-1.5 rounded-full bg-[#6f6f6f]" />
      <div className="absolute left-[641px] top-[818px] h-1.5 w-[363px] rounded-full bg-[#6f6f6f]" />
    </div>
  );
}

function PageTabs() {
  return (
    <div className="flex h-[39px] flex-none border-t border-[#dadce0] bg-[#f1f3f4]">
      <div className="flex w-[29px] flex-none items-center justify-center border-r border-[#e3e5e7]">
        <svg viewBox="0 0 4 14" className="ml-0.5 mt-1 h-3.5 w-1">
          <path d="M.5 0h3v3h-3zM.5 5.500h3v3h-3zM.5 11h3v3h-3z" fill="#8c8c8c" />
        </svg>
      </div>
      <div className="flex w-[137px] flex-none items-center justify-center bg-white pt-1 text-[12.6px] font-bold text-[#de6c12]">Page-1</div>
      <div className="flex w-[30px] flex-none items-center justify-center border-x border-[#e3e5e7]">
        <svg viewBox="0 0 14 14" className="size-[13px]">
          <path d="M7 0v14M0 7h14" stroke="#909090" strokeWidth="3" />
        </svg>
      </div>
    </div>
  );
}

/* ---------- format panel ---------- */

function Check({ label, on, children }: { label: string; on?: boolean; children?: React.ReactNode }) {
  return (
    <div className="flex h-6 items-center">
      <svg viewBox="0 0 14 14" className="mr-1.5 size-3.5 flex-none">
        {on ? (
          <>
            <rect width="14" height="14" rx="1.5" fill="#e95420" />
            <path d="M3 7.300L5.800 10 11 4.300" fill="none" stroke="#fff" strokeWidth="1.9" />
          </>
        ) : (
          <rect x=".9" y=".9" width="12.2" height="12.2" rx="1.5" fill="#fff" stroke="#8f8f9d" strokeWidth="1.6" />
        )}
      </svg>
      {label}
      {children}
    </div>
  );
}

function Heading({ children }: P) {
  return <div className="flex h-6 items-center font-bold text-[#6e6e6e]">{children}</div>;
}

function FormatPanel() {
  return (
    <aside className="flex w-[241px] flex-none flex-col border-l border-[#dadce0] bg-[#fbfbfb] text-[11.7px] text-[#757575]">
      <div className="flex h-[34px] flex-none text-[12.6px] font-bold text-[#707070]">
        <div className="flex w-[106px] items-center justify-center pt-0.5">Diagram</div>
        <div className="flex w-[107px] items-center justify-center border-b border-l border-[#dadce0] bg-[#f1f3f4] tracking-[0.3px]">Style</div>
        <div className="flex w-[27px] items-center justify-center border-x border-b border-[#dadce0] bg-[#f1f3f4]">
          <svg viewBox="0 0 10 10" className="mb-0.5 size-[9px]">
            <path d="M.8.8l8.400 8.400M9.200.8L.8 9.200" stroke="#aebfd0" strokeWidth="2" />
          </svg>
        </div>
      </div>
      <section className="border-b border-[#dadce0] pb-[13px] pl-3.5 pt-[11px]">
        <Heading>View</Heading>
        <Check label="Grid" on>
          <div className="ml-auto flex h-[21px] w-[49px] items-center justify-end rounded-[3px] border border-[#9a9a9a] bg-white pr-0.5 pt-px tracking-[0.15px] text-black">10 pt</div>
          <div className="flex h-[21px] w-[11px] flex-col items-center justify-around rounded-[2px] border border-[#b5b5b5] bg-[#fafafa] py-px">
            <svg viewBox="0 0 8 4" className="h-1 w-2"><path d="M1 4l3-3 3 3z" fill="#ddd" stroke="#777" strokeWidth=".8" /></svg>
            <span className="h-px w-full bg-[#b5b5b5]" />
            <svg viewBox="0 0 8 4" className="h-1 w-2"><path d="M1 0l3 3 3-3z" fill="#ddd" stroke="#777" strokeWidth=".8" /></svg>
          </div>
          <div className="ml-1 mr-4 flex h-[22px] w-[46px] items-center justify-center rounded border border-[#7d7d7d] bg-linear-to-b from-[#f0f0f0] to-[#dcdcdc]">
            <span className="h-3.5 w-[38px] border border-black bg-[#d0d0d0]" />
          </div>
        </Check>
        <Check label="Page View" on />
        <Check label="Background">
          <div className="ml-auto mr-[66px] flex h-[22px] w-14 items-center justify-center rounded border border-[#8a8a8a] bg-linear-to-b from-[#f3f3f3] to-[#dedede] pt-px text-[#222]">Change</div>
        </Check>
        <Check label="Shadow" />
      </section>
      <section className="border-b border-[#dadce0] pb-[13px] pl-3.5 pt-2">
        <Heading>Options</Heading>
        <Check label="Connection Arrows" on />
        <Check label="Connection Points" on />
        <Check label="Guides" on />
      </section>
      <section className="border-b border-[#dadce0] pb-3.5 pl-3.5 pt-2">
        <Heading>Paper Size</Heading>
        <div className="mt-px flex h-[19px] w-[206px] items-center rounded-[3px] border border-[#8f8f9d] bg-[#e9e9ed] pl-1 tracking-[-0.07px] text-black">
          A4 (210 mm x 297 mm)
          <svg viewBox="0 0 10 6" className="ml-auto mr-[5px] h-[5px] w-2">
            <path d="M1 .8l4 4 4-4" fill="none" stroke="#111" strokeWidth="1.8" />
          </svg>
        </div>
        <div className="mt-1.5 flex h-6 items-center pl-[9px]">
          <svg viewBox="0 0 14 14" className="mr-1.5 size-3.5">
            <circle cx="7" cy="7" r="6" fill="#fff" stroke="#e95420" strokeWidth="1.8" />
            <circle cx="7" cy="7" r="3.3" fill="#e95420" />
          </svg>
          <span className="mt-px w-[52px]">Portrait</span>
          <svg viewBox="0 0 14 14" className="mr-1.5 size-3.5">
            <circle cx="7" cy="7" r="6" fill="#fff" stroke="#8f8f9d" strokeWidth="1.6" />
          </svg>
          <span className="mt-px tracking-[-0.11px]">Landscape</span>
        </div>
      </section>
      <section className="flex flex-col gap-0.5 border-b border-[#dadce0] pb-3.5 pl-3.5 pr-4 pt-3 text-black">
        <div className="flex h-[21px] items-center justify-center rounded-[3px] border border-[#8f8f9d] bg-[#e9e9ed]">Edit Data...</div>
        <div className="flex h-[21px] items-center justify-center rounded-[3px] border border-[#8f8f9d] bg-[#e9e9ed] tracking-[0.08px]">Clear Default Style</div>
      </section>
    </aside>
  );
}

export default function App() {
  return (
    <div className="flex h-[1080px] w-[1920px] flex-col overflow-hidden bg-[#fbfbfb] font-['Open_Sans','Noto_Sans',sans-serif]">
      <TopBar />
      <div className="flex min-h-0 flex-1">
        <Dock />
        <main className="flex min-w-0 flex-1 flex-col">
          <BrowserTabs />
          <NavBar />
          <EditorHeader />
          <Toolbar />
          <div className="flex min-h-0 flex-1">
            <ShapePanel />
            <div className="flex w-[13px] flex-none items-center justify-center gap-px border-r border-[#e5e5e5] bg-[#fbfbfb]">
              <span className="h-[7px] w-px bg-[#555]" />
              <span className="h-[7px] w-px bg-[#555]" />
            </div>
            <div className="flex min-w-0 flex-1 flex-col">
              <Canvas />
              <PageTabs />
            </div>
            <FormatPanel />
          </div>
        </main>
      </div>
    </div>
  );
}
